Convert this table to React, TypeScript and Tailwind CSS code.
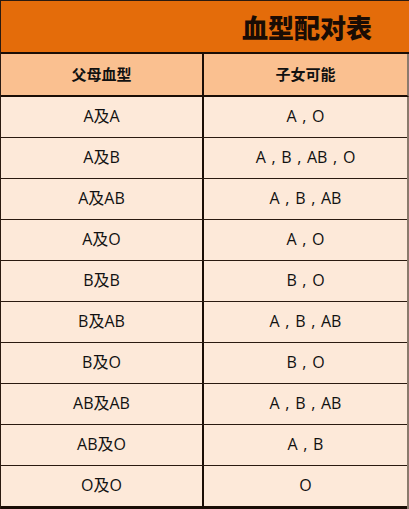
const rows = [
  ['A及A', 'A , O'],
  ['A及B', 'A , B , AB , O'],
  ['A及AB', 'A , B , AB'],
  ['A及O', 'A , O'],
  ['B及B', 'B , O'],
  ['B及AB', 'A , B , AB'],
  ['B及O', 'B , O'],
  ['AB及AB', 'A , B , AB'],
  ['AB及O', 'A , B'],
  ['O及O', 'O'],
];

const App = () => {
  return (
    <div
      className="w-[409px] h-[509px] bg-white text-[#111] border-l border-t border-[#2a1a10]"
      style={{ fontFamily: '"Open Sans", "Noto Sans CJK SC", sans-serif' }}
    >
      {/* Title bar */}
      <div
        className="h-[53px] bg-[#E46C0A] flex items-center justify-end pr-[37px] border-b-2 border-[#1a0d05]"
        style={{ fontFamily: '"Noto Sans CJK SC", sans-serif' }}
      >
        <h1 className="text-[26px] font-black leading-none text-[#1a0c04]">血型配对表</h1>
      </div>

      {/* Header */}
      <div
        className="grid grid-cols-[203px_1fr] h-[43px] bg-[#FAC090] border-b-2 border-[#1a0d05] border-r-2 border-r-[#8a7a6c]"
        style={{ fontFamily: '"Noto Sans CJK SC", sans-serif' }}
      >
        <div className="flex items-center justify-center border-r-2 border-[#1a0d05] text-[15px] font-bold">父母血型</div>
        <div className="flex items-center justify-center text-[15px] font-bold">子女可能</div>
      </div>

      {/* Body */}
      <div className="border-r-2 border-[#8a7a6c]">
        {rows.map((r, i) => (
          <div
            key={i}
            className={
              'grid grid-cols-[203px_1fr] bg-[#FDE9D9] ' +
              (i === rows.length - 1 ? 'h-[43px] border-b-[3px] border-[#1a0d05]' : 'h-[41px] border-b-[1.5px] border-[#2a1a10]')
            }
          >
            <div className="flex items-center justify-center pb-[3px] border-r-2 border-[#1a0d05] text-[16px]">{r[0]}</div>
            <div className="flex items-center justify-center pb-[3px] text-[16px] [word-spacing:1.5px]">{r[1]}</div>
          </div>
        ))}
      </div>
    </div>
  );
};

export default App;
